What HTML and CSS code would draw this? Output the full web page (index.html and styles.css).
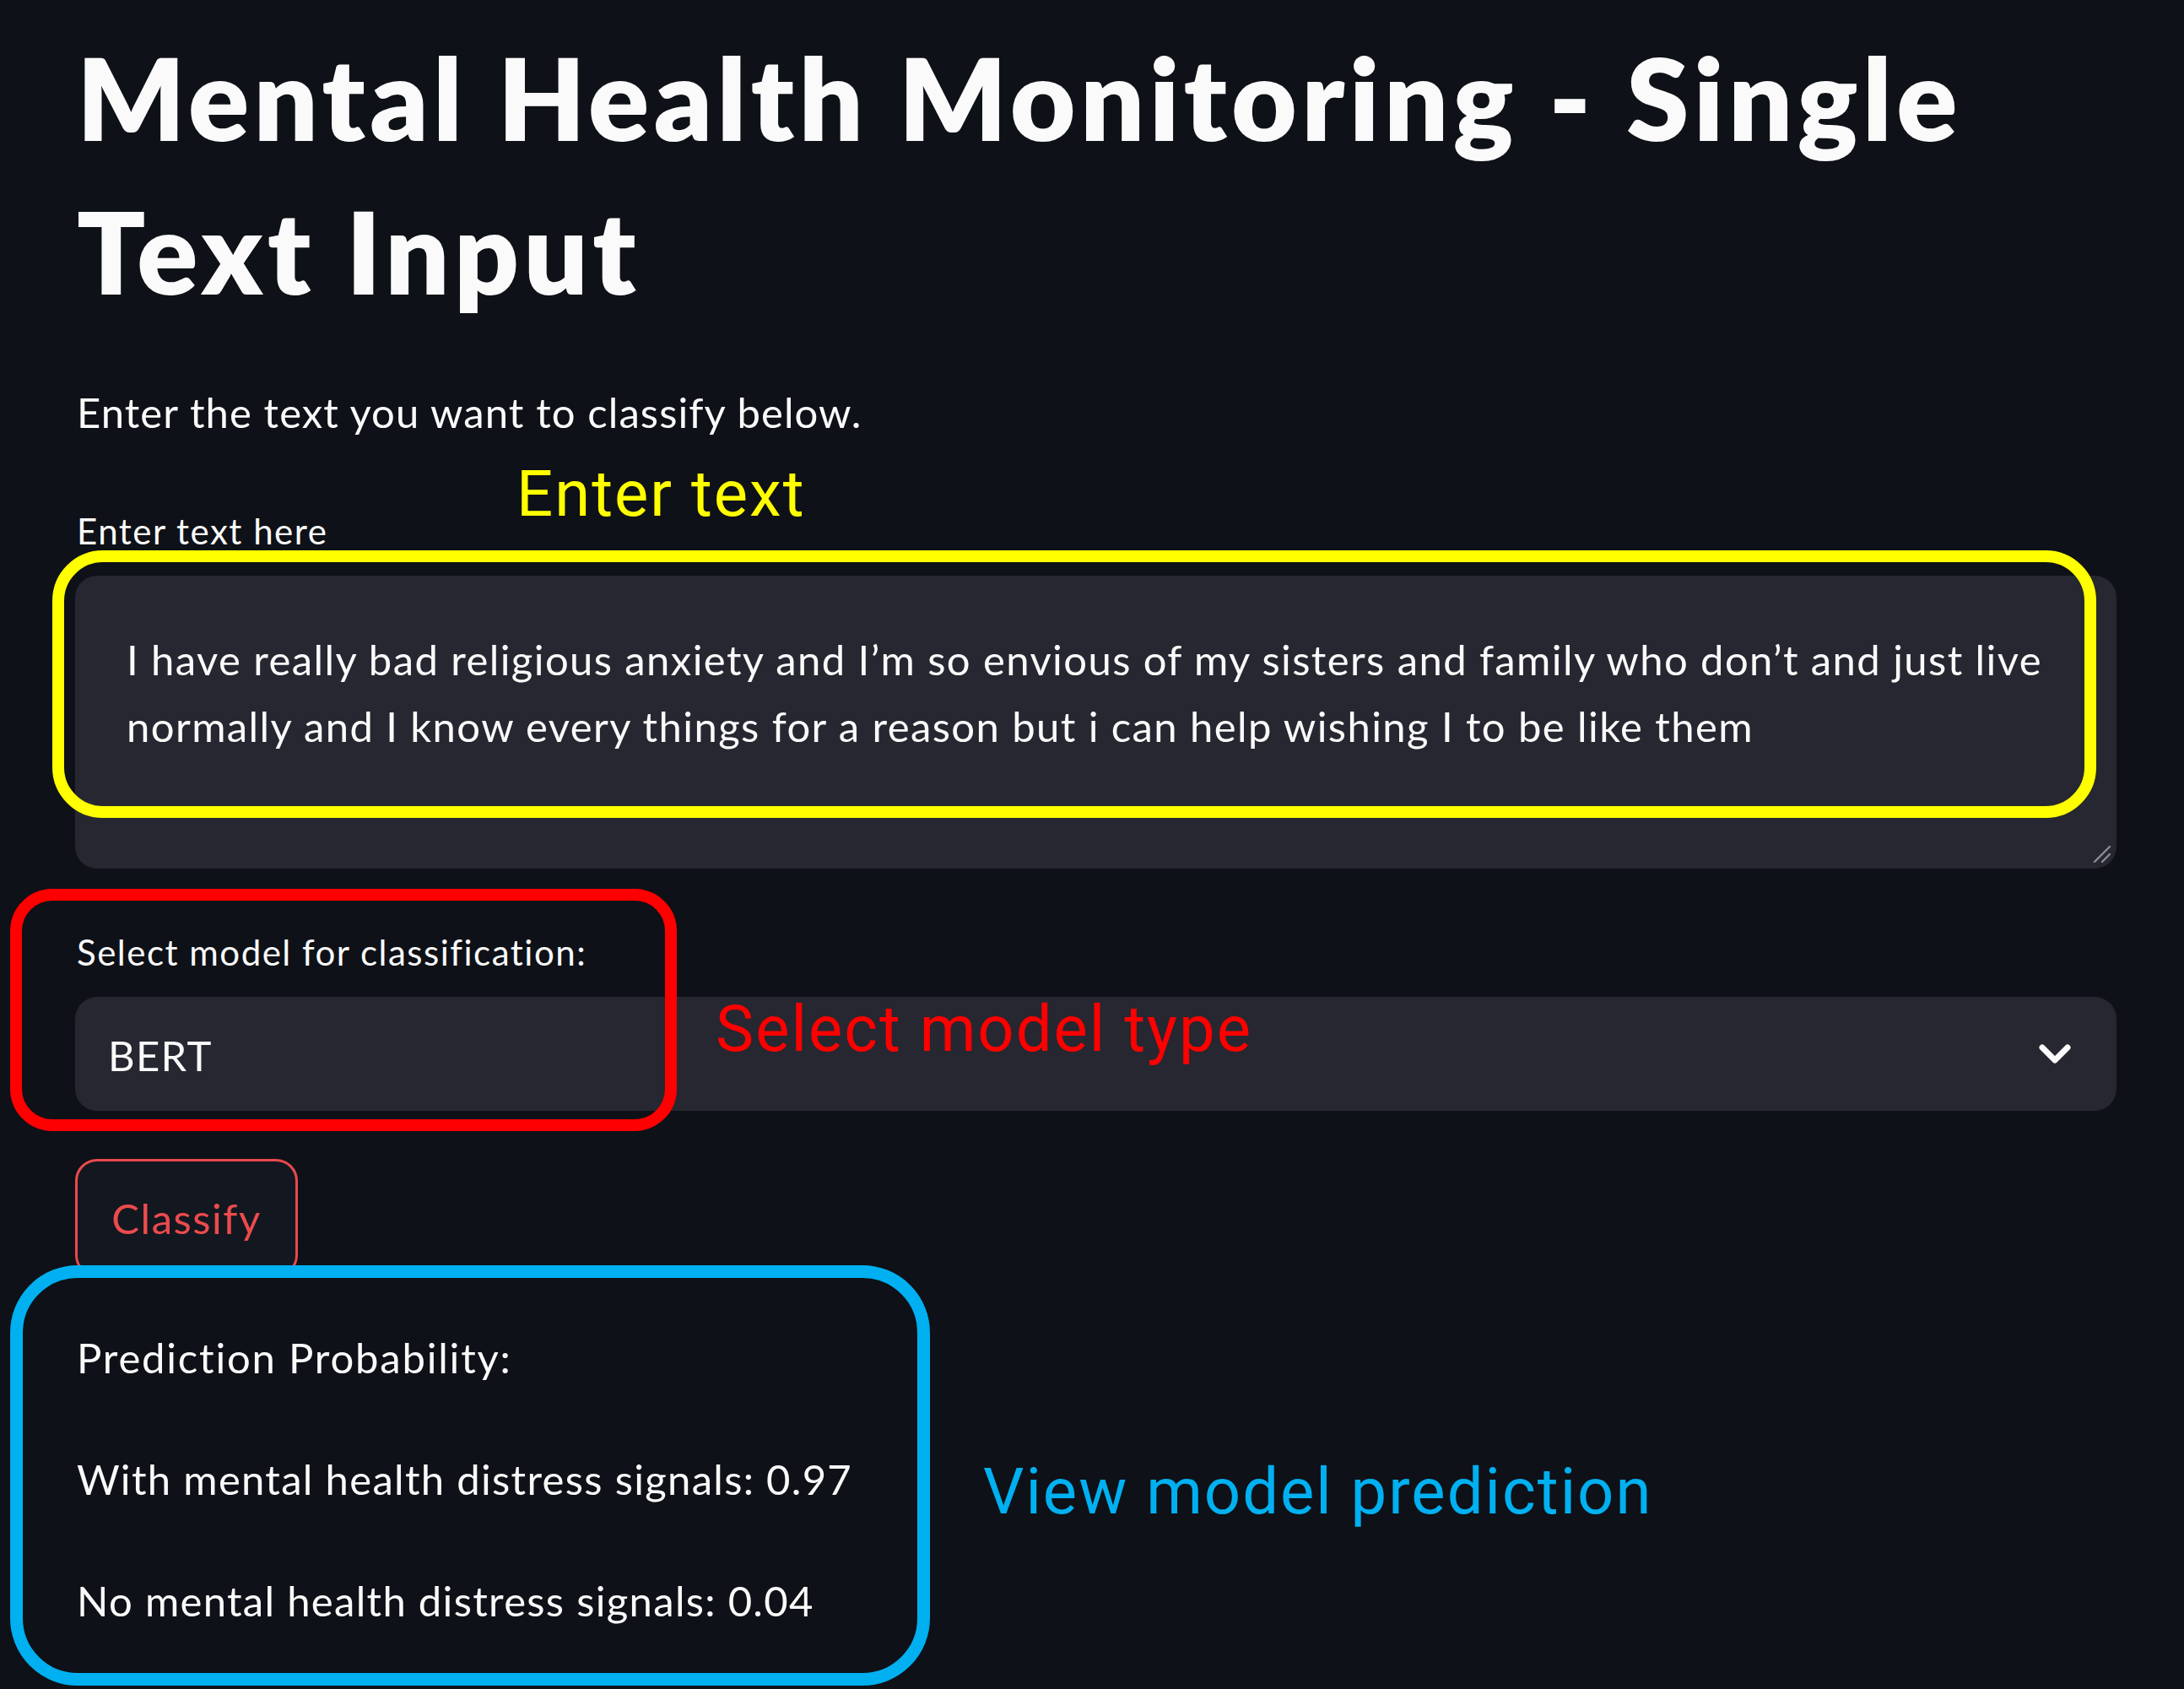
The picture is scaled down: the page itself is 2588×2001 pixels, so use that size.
FILE: index.html
```html
<!DOCTYPE html>
<html lang="en">
<head>
<meta charset="utf-8">
<title>Mental Health Monitoring - Single Text Input</title>
<link rel="stylesheet" href="styles.css">
</head>
<body>
<main class="page">
  <h1 class="title">Mental Health Monitoring - Single<br>Text Input</h1>
  <p class="intro">Enter the text you want to classify below.</p>

  <div class="field field-text">
    <label class="label">Enter text here</label>
    <div class="textarea">I have really bad religious anxiety and I’m so envious of my sisters and family who don’t and just live<br>normally and I know every things for a reason but i can help wishing I to be like them<svg class="grip" width="24" height="24" viewBox="0 0 24 24"><path d="M22 4 L4 22 M22 13 L13 22" stroke="#8a8c94" stroke-width="2.4" stroke-linecap="round" fill="none"/></svg></div>
  </div>

  <div class="field field-select">
    <label class="label">Select model for classification:</label>
    <div class="select">
      <span class="select-value">BERT</span>
      <svg class="chevron" width="40" height="26" viewBox="0 0 40 26"><path d="M5 5 L20 20 L35 5" stroke="#fafafa" stroke-width="7" stroke-linecap="round" stroke-linejoin="round" fill="none"/></svg>
    </div>
  </div>

  <button class="btn">Classify</button>

  <div class="results">
    <p class="result result-head">Prediction Probability:</p>
    <p class="result">With mental health distress signals: 0.97</p>
    <p class="result">No mental health distress signals: 0.04</p>
  </div>

  <div class="mark mark-yellow"></div>
  <div class="mark mark-red"></div>
  <div class="mark mark-blue"></div>
  <span class="note note-yellow">Enter text</span>
  <span class="note note-red">Select model type</span>
  <span class="note note-blue">View model prediction</span>
</main>
</body>
</html>
```

FILE: styles.css
```css
* { box-sizing: border-box; }

html, body {
  margin: 0;
  padding: 0;
  background: #0e1117;
}

.page {
  position: relative;
  width: 2588px;
  height: 2001px;
  overflow: hidden;
  padding: 25px 0 0 91px;
  color: #fafafa;
  font-family: Lato, "Source Sans Pro", "Noto Sans", sans-serif;
  font-size: 49px;
  line-height: 79px;
  letter-spacing: 1.3px;
}

.title {
  margin: 0;
  font-size: 134px;
  line-height: 182px;
  font-weight: 800;
  letter-spacing: 5.4px;
}

.intro {
  margin: 60px 0 0;
  letter-spacing: 1.1px;
}

.field {
  display: flex;
  flex-direction: column;
  width: 2419px;
  margin-left: -2px;
}

.field-text { margin-top: 71px; }
.field-select { margin-top: 69px; }

.label {
  font-size: 42px;
  line-height: 60px;
  letter-spacing: 1.5px;
  margin: 0 0 23px 2px;
}

.textarea {
  position: relative;
  height: 347px;
  background: #262730;
  border-radius: 26px;
  padding: 60px 0 0 61px;
  white-space: nowrap;
  letter-spacing: 1.4px;
}

.grip {
  position: absolute;
  right: 6px;
  bottom: 6px;
}

.select {
  display: flex;
  align-items: center;
  justify-content: space-between;
  height: 135px;
  background: #262730;
  border-radius: 26px;
  padding: 4px 53px 0 39px;
}

.chevron { margin-top: -4px; }

.btn {
  display: block;
  margin: 57px 0 0 -2px;
  width: 264px;
  height: 140px;
  padding: 0;
  background: #131720;
  border: 3px solid #e84a4c;
  border-radius: 26px;
  color: #ec4b4d;
  font: inherit;
  letter-spacing: 1.5px;
  text-align: center;
}

.results {
  display: flex;
  flex-direction: column;
  gap: 65px;
  margin-top: 56px;
}

.result { margin: 0; }
.result-head { letter-spacing: 1.8px; }

.mark {
  position: absolute;
  border-style: solid;
}

.mark-yellow {
  left: 62px; top: 652px; width: 2422px; height: 317px;
  border-width: 14px; border-color: #ffff00; border-radius: 60px;
}

.mark-red {
  left: 12px; top: 1053px; width: 790px; height: 287px;
  border-width: 14px; border-color: #ff0000; border-radius: 50px;
}

.mark-blue {
  left: 12px; top: 1499px; width: 1090px; height: 498px;
  border-width: 15px; border-color: #00b0f0; border-radius: 80px;
}

.note {
  position: absolute;
  font-family: Roboto, "Liberation Sans", sans-serif;
  font-size: 76px;
  line-height: 90px;
  letter-spacing: 2px;
  white-space: nowrap;
}

.note-yellow { left: 612px; top: 540px; color: #ffff00; }
.note-red { left: 848px; top: 1174px; color: #ff0000; }
.note-blue { left: 1165px; top: 1722px; color: #00b0f0; }
```
